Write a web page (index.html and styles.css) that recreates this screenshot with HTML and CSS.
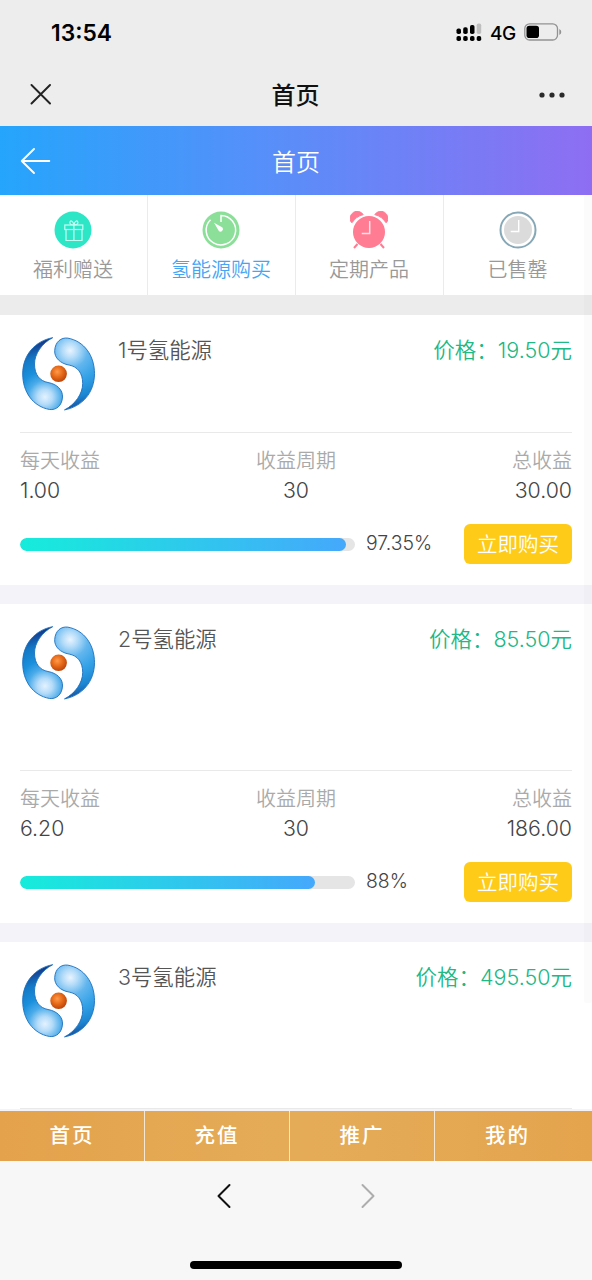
FILE: index.html
```html
<!DOCTYPE html>
<html lang="zh-CN">
<head>
<meta charset="utf-8">
<title>首页</title>
<link rel="stylesheet" href="styles.css">
</head>
<body>
<svg width="0" height="0" class="defs">
  <defs>
    <radialGradient id="lobe" gradientUnits="userSpaceOnUse" cx="25" cy="62" r="62">
      <stop offset="0" stop-color="#e4f2ff"/><stop offset=".12" stop-color="#b5dcf9"/><stop offset=".27" stop-color="#4aabe9"/><stop offset=".42" stop-color="#1a90dc"/><stop offset=".65" stop-color="#1479c6"/><stop offset=".85" stop-color="#164394"/><stop offset="1" stop-color="#142a6c"/>
    </radialGradient>
    <radialGradient id="lobeLight" gradientUnits="userSpaceOnUse" cx="27" cy="62" r="62">
      <stop offset="0" stop-color="#e9f4ff"/><stop offset=".12" stop-color="#b5dcf9"/><stop offset=".28" stop-color="#62b6ee"/><stop offset=".5" stop-color="#34a2e7"/><stop offset=".75" stop-color="#1c86d2"/><stop offset="1" stop-color="#153f8c"/>
    </radialGradient>
    <radialGradient id="core" cx=".42" cy=".38" r=".65">
      <stop offset="0" stop-color="#ff9a4a"/><stop offset=".5" stop-color="#e66a18"/><stop offset="1" stop-color="#b8420a"/>
    </radialGradient>
    <path id="lobeShape" d="M32.700 2.700C22 8 14.500 19 14.500 29c0 11 5.500 17 13.500 18.500 9 1.500 15 7.500 14.500 14.500-.5 9-6.500 13.300-13 12.500C13 71.500 2.700 57 2.700 39 2.700 20 15 6 32.700 2.700z"/>
    <symbol id="logo" viewBox="0 0 78 78">
      <use href="#lobeShape" fill="url(#lobe)" stroke="#1c6fbe" stroke-width=".9"/>
      <use href="#lobeShape" transform="rotate(180 38.600 38.800)" fill="url(#lobeLight)" stroke="#1c6fbe" stroke-width=".9"/>
      <circle cx="38.600" cy="38.800" r="8.300" fill="url(#core)"/>
    </symbol>
  </defs>
</svg>
<div class="screen">
  <header class="status">
    <span class="time">13:54</span>
    <div class="indicators">
      <svg class="signal" width="26" height="20" viewBox="0 0 26 20">
        <g fill="#000">
          <rect x="0.500" y="6.500" width="4.500" height="5.500" rx="1.800"/><rect x="7.200" y="5.200" width="4.500" height="6.800" rx="1.800"/><rect x="14" y="3" width="4.500" height="9" rx="1.800"/>
          <rect x=".5" y="14" width="4.500" height="5" rx="1.800"/><rect x="7.200" y="14" width="4.500" height="5" rx="1.800"/><rect x="14" y="14" width="4.500" height="5" rx="1.800"/><rect x="20.700" y="14" width="4.500" height="5" rx="1.800"/>
        </g>
        <rect x="20.700" y="1.500" width="4.500" height="10.500" rx="1.800" fill="#bfbfbf"/>
      </svg>
      <span class="network">4G</span>
      <svg class="battery" width="38" height="18" viewBox="0 0 38 18">
        <rect x=".8" y=".8" width="32.700" height="16.200" rx="4.800" fill="none" stroke="#929292" stroke-width="1.300"/>
        <rect x="2.500" y="2.700" width="12.500" height="12.400" rx="2.800" fill="#000"/>
        <path d="M35.300 6v6q2-1 2-3t-2-3z" fill="#929292"/>
      </svg>
    </div>
  </header>
  <nav class="chrome">
    <svg width="22" height="22" viewBox="0 0 22 22"><path d="M1.500 1l18.500 18.500M20 1l-18.500 18.500" stroke="#222" stroke-width="1.900" stroke-linecap="round"/></svg>
    <h1 class="chrome-title">首页</h1>
    <svg width="26" height="6" viewBox="0 0 26 6" fill="#2a2a2a"><circle cx="3" cy="3" r="2.600"/><circle cx="13" cy="3" r="2.600"/><circle cx="23" cy="3" r="2.600"/></svg>
  </nav>
  <div class="banner">
    <svg width="32" height="28" viewBox="0 0 32 28" fill="none" stroke="#fff" stroke-width="1.900" stroke-linecap="round" stroke-linejoin="round"><path d="M29.300 14H1.800M14 2L1.800 14 14 26"/></svg>
    <h2 class="banner-title">首页</h2>
  </div>
  <div class="tabs">
    <div class="tab">
      <svg width="38" height="38" viewBox="0 0 38 38"><circle cx="19" cy="19" r="18.500" fill="#2ce6c6"/><g fill="none" stroke="#c4fff4" stroke-width="1.200"><rect x="10.800" y="14" width="18" height="4.500"/><path d="M12 18.500v11h16v-11M19.900 14v15.500M19.900 14c-1-5-4.300-5-4-2 .2 1.500 2 2 4 2 2 0 3.800-.5 4-2 .3-3-3-3-4 2z"/></g></svg>
      <span>福利赠送</span>
    </div>
    <div class="tab active">
      <svg width="38" height="38" viewBox="0 0 38 38"><circle cx="19" cy="19" r="18.500" fill="#8bdf98"/><path d="M19 11V4.500A14.700 14.700 0 1 1 8.500 8.800" fill="none" stroke="#fff" stroke-width="1.500"/><path d="M12 11.800l8.500 4.700a2.600 2.600 0 0 1-3.500 3.700z" fill="#fff"/></svg>
      <span>氢能源购买</span>
    </div>
    <div class="tab">
      <svg width="38" height="38" viewBox="0 0 38 38"><g fill="#ff7c93"><path d="M1.200 11.200A6.500 6.500 0 0 1 13.200 3.600Q5.500 5.800 2.200 11.600zM36.800 11.200A6.500 6.500 0 0 0 24.800 3.600Q32.500 5.800 35.800 11.600z" stroke="#ff7c93" stroke-width="1" stroke-linejoin="round"/><circle cx="19" cy="21" r="16"/></g><path d="M7.500 33l-3.500 4M30.500 33l3.500 4" stroke="#ff7c93" stroke-width="2"/><path d="M19.700 10v12.500h-8" fill="none" stroke="#ffe2e7" stroke-width="1.500"/></svg>
      <span>定期产品</span>
    </div>
    <div class="tab">
      <svg width="38" height="38" viewBox="0 0 38 38"><circle cx="19" cy="19" r="17.500" fill="#fff" stroke="#86a8b6" stroke-width="2"/><circle cx="19" cy="19" r="14" fill="#dbdbdb"/><path d="M19.700 9v11.500h-8" fill="none" stroke="#fff" stroke-width="1.400"/></svg>
      <span>已售罄</span>
    </div>
  </div>
  <main class="list">
    <section class="card">
      <div class="card-head short">
        <svg class="logo"><use href="#logo"/></svg>
        <h3 class="name">1号氢能源</h3>
        <span class="price">价格：19.50元</span>
      </div>
      <dl class="stats">
        <div class="stat"><dt>每天收益</dt><dd>1.00</dd></div>
        <div class="stat"><dt>收益周期</dt><dd>30</dd></div>
        <div class="stat"><dt>总收益</dt><dd>30.00</dd></div>
      </dl>
      <div class="buy-row">
        <div class="track"><div class="fill" style="width:97.35%"></div></div>
        <span class="percent">97.35%</span>
        <button class="buy">立即购买</button>
      </div>
    </section>
    <section class="card">
      <div class="card-head">
        <svg class="logo"><use href="#logo"/></svg>
        <h3 class="name">2号氢能源</h3>
        <span class="price">价格：85.50元</span>
      </div>
      <dl class="stats">
        <div class="stat"><dt>每天收益</dt><dd>6.20</dd></div>
        <div class="stat"><dt>收益周期</dt><dd>30</dd></div>
        <div class="stat"><dt>总收益</dt><dd>186.00</dd></div>
      </dl>
      <div class="buy-row">
        <div class="track"><div class="fill" style="width:88%"></div></div>
        <span class="percent">88%</span>
        <button class="buy">立即购买</button>
      </div>
    </section>
    <section class="card">
      <div class="card-head">
        <svg class="logo"><use href="#logo"/></svg>
        <h3 class="name">3号氢能源</h3>
        <span class="price">价格：495.50元</span>
      </div>
    </section>
  </main>
  <nav class="bottom-nav">
    <span>首页</span><span>充值</span><span>推广</span><span>我的</span>
  </nav>
  <footer class="toolbar">
    <div class="history">
      <svg width="16" height="26" viewBox="0 0 16 26"><path d="M13.500 2L2.500 13l11 11" fill="none" stroke="#111" stroke-width="2" stroke-linecap="round" stroke-linejoin="round"/></svg>
      <svg width="16" height="26" viewBox="0 0 16 26"><path d="M2.500 2l11 11-11 11" fill="none" stroke="#adadad" stroke-width="2" stroke-linecap="round" stroke-linejoin="round"/></svg>
    </div>
    <div class="home-bar"></div>
  </footer>
  <div class="scroll-track"></div>
</div>
</body>
</html>
```
FILE: styles.css
```css
* { box-sizing: border-box; }
body, h1, h2, h3, dl, dd { margin: 0; font-weight: inherit; }
body { font-family: Inter, "Noto Sans CJK SC", sans-serif; font-weight: 350; color: #555; background: #fff; }
svg { display: block; flex: none; }
.defs { position: absolute; }
.screen { position: relative; width: 592px; height: 1280px; display: flex; flex-direction: column; overflow: hidden; }

.status { height: 63px; flex: none; background: #ededed; color: #000; display: flex; justify-content: space-between; padding: 19px 30px 0 51px; }
.time { font-size: 22.800px; line-height: 28px; font-weight: 600; }
.indicators { display: flex; align-items: flex-start; }
.signal { margin-top: 3px; }
.network { width: 42px; padding-left: 8px; font-size: 19px; line-height: 29px; font-weight: 500; letter-spacing: -.5px; }
.battery { margin-top: 4px; }

.chrome { height: 63px; flex: none; background: #ededed; display: grid; grid-template-columns: 1fr auto 1fr; align-items: center; padding: 0 27px 0 30px; }
.chrome svg:last-child { justify-self: end; }
.chrome-title { font-size: 24px; line-height: 34px; font-weight: 500; color: #111; margin-left: -4px; padding-top: 2px; }

.banner { height: 69px; flex: none; background: linear-gradient(to right, #25a5fc, #578ff9 45%, #8e6ef2); color: #fff; display: grid; grid-template-columns: 1fr auto 1fr; align-items: center; padding: 1px 20px 0; }
.banner-title { font-size: 24px; line-height: 34px; padding-top: 3px; }

.tabs { height: 120px; flex: none; display: grid; grid-template-columns: repeat(4, 1fr); border-bottom: 20px solid #ececec; }
.tab { display: flex; flex-direction: column; align-items: center; padding: 16px 1px 0 0; border-right: 1px solid #ebebeb; color: #999; font-size: 20px; line-height: 30px; gap: 6px; }
.tab:last-child { border-right: 0; }
.active { color: #45a5f5; }

.list { height: 796px; flex: none; overflow: hidden; }
.card { padding: 0 20px; border-bottom: 19px solid #f4f3f9; }
.card-head { height: 167px; display: flex; padding-top: 20px; border-bottom: 1px solid #e9e9e9; font-size: 21.500px; line-height: 31px; }
.short { height: 118px; }
.logo { width: 78px; height: 78px; }
.name { margin-left: 20px; flex: 1; color: #555; font-size: 21.400px; }
.price { color: #20b884; }

.stats { display: grid; grid-template-columns: 1fr auto 1fr; padding-top: 13px; }
.stat:nth-child(2) { text-align: center; }
.stat:last-child { text-align: right; }
.stat dt { font-size: 20px; line-height: 30px; color: #aaa; }
.stat dd { font-size: 21.300px; line-height: 28px; color: #444; }

.buy-row { display: flex; align-items: center; height: 81px; padding-bottom: 1px; }
.track { width: 335px; height: 13px; border-radius: 7px; background: #e5e5e5; overflow: hidden; }
.fill { height: 100%; border-radius: 7px; background: linear-gradient(to right, #16ecdb, #45a8fc); }
.percent { flex: 1; margin-left: 11px; padding-bottom: 2px; font-size: 19.400px; line-height: 28px; color: #444; }
.buy { width: 108px; height: 40px; padding: 1px 0 0; border: 0; border-radius: 6px; background: #ffcb19; color: #fff; font: 350 20.500px/38px Inter, "Noto Sans CJK SC", sans-serif; }

.bottom-nav { height: 50px; flex: none; display: grid; grid-template-columns: 145px 145px 145px 1fr; background: linear-gradient(90deg, #e4a24c, #e5ac58 50%, #e4a44e); color: #fff; }
.bottom-nav span { border-right: 1px solid #f5e7d2; text-align: center; font-size: 20.500px; line-height: 50px; letter-spacing: 2px; font-weight: 500; }
.bottom-nav span:last-child { border: 0; padding-right: 12px; }

.toolbar { height: 119px; background: #f7f7f7; padding-top: 22px; display: flex; flex-direction: column; align-items: center; }
.history { display: flex; gap: 128px; }
.home-bar { width: 212px; height: 8px; border-radius: 4px; background: #000; margin-top: 52px; }
.scroll-track { position: absolute; top: 195px; right: 0; width: 8px; height: 808px; background: rgba(0,0,0,.015); border-radius: 2px; }
```
